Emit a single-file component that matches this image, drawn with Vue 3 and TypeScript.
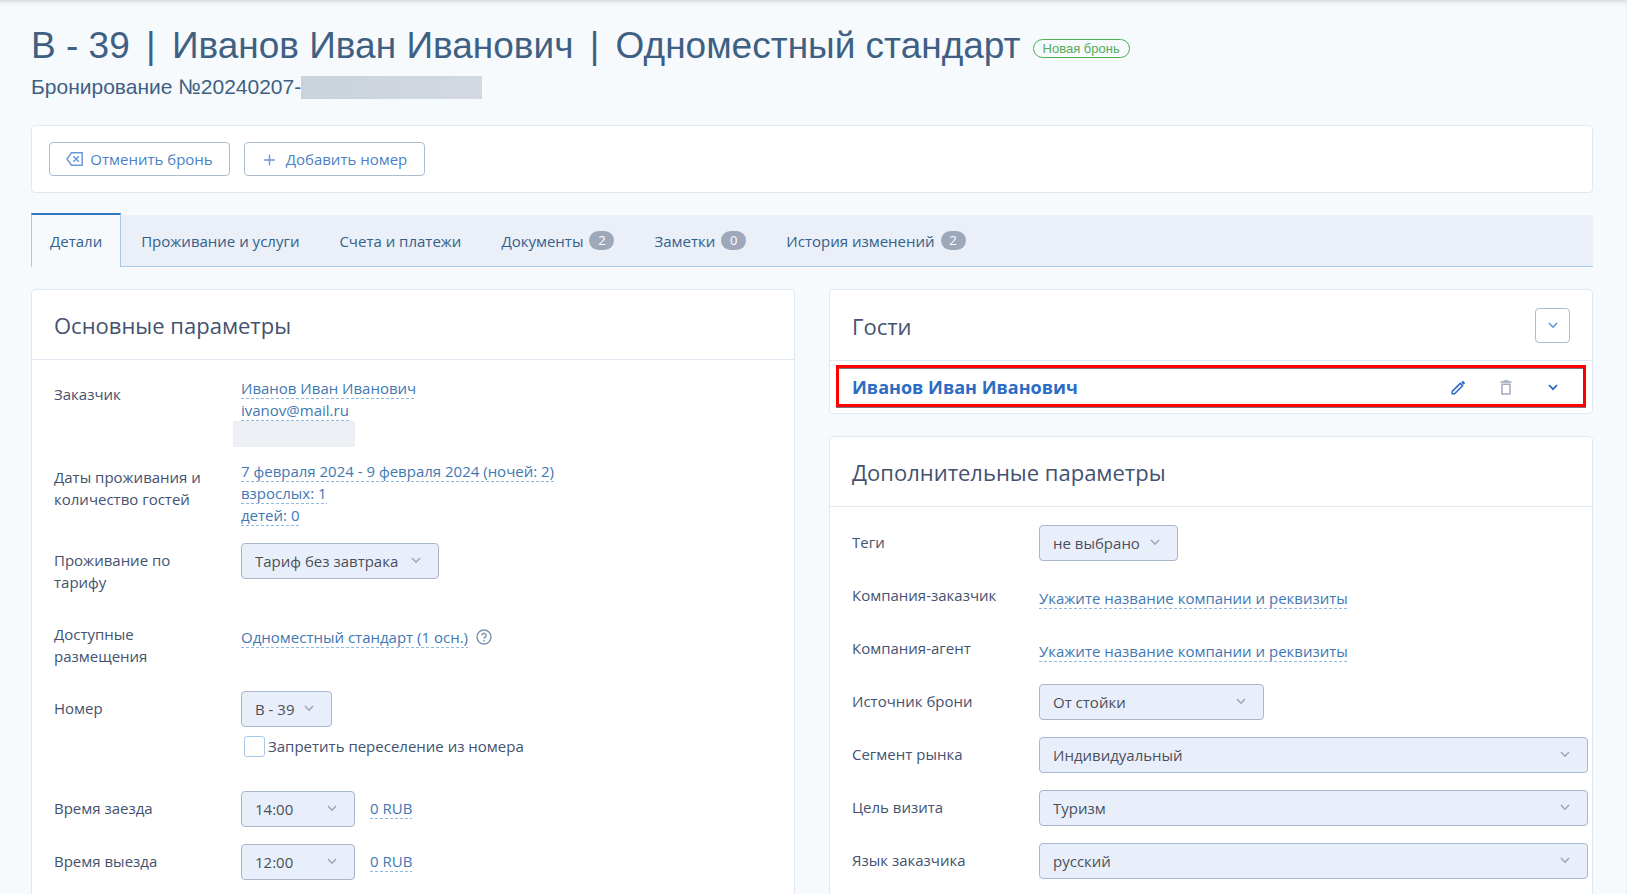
<script setup lang="ts">
import { ref } from 'vue'

interface Tab {
  id: string
  title: string
  count?: number
}

interface SelectRow {
  id: string
  label: string
  value: string
  size: string
}

const tabs: Tab[] = [
  { id: 'details', title: 'Детали' },
  { id: 'services', title: 'Проживание и услуги' },
  { id: 'payments', title: 'Счета и платежи' },
  { id: 'documents', title: 'Документы', count: 2 },
  { id: 'notes', title: 'Заметки', count: 0 },
  { id: 'history', title: 'История изменений', count: 2 },
]
const activeTab = ref('details')
const lockRoom = ref(false)

const times = [
  { id: 'arrival', label: 'Время заезда', value: '14:00', price: '0 RUB' },
  { id: 'departure', label: 'Время выезда', value: '12:00', price: '0 RUB' },
]

const companies = ['Компания-заказчик', 'Компания-агент']

const extras: SelectRow[] = [
  { id: 'source', label: 'Источник брони', value: 'От стойки', size: 'wide' },
  { id: 'segment', label: 'Сегмент рынка', value: 'Индивидуальный', size: 'full' },
  { id: 'purpose', label: 'Цель визита', value: 'Туризм', size: 'full' },
  { id: 'language', label: 'Язык заказчика', value: 'русский', size: 'full' },
]
</script>

<template>
  <main class="page">
    <header class="heading">
      <div class="title-line">
        <h1>B - 39 <span class="bar">|</span> Иванов Иван Иванович <span class="bar">|</span> Одноместный стандарт</h1>
        <span class="status">Новая бронь</span>
      </div>
      <p class="number">Бронирование №20240207-<span class="redacted"></span></p>
    </header>

    <section class="toolbar">
      <button type="button" class="action">
        <svg width="17" height="14" viewBox="0 0 17 14" fill="none" stroke="currentColor" stroke-width="1.5">
          <path d="M5.5 .8H16.2v12.4H5.5L1 7z" />
          <path d="M7.5 4.2l5.4 5.6M12.9 4.2L7.5 9.8" />
        </svg>
        Отменить бронь
      </button>
      <button type="button" class="action">
        <svg width="17" height="14" viewBox="0 0 17 14" fill="none" stroke="currentColor" stroke-width="1.4">
          <path d="M7.5 2.5v11M2 8h11" />
        </svg>
        Добавить номер
      </button>
    </section>

    <nav class="tabs">
      <button
        v-for="tab in tabs"
        :key="tab.id"
        type="button"
        class="tab"
        :class="{ active: tab.id === activeTab }"
        @click="activeTab = tab.id"
      >
        {{ tab.title }}
        <span v-if="tab.count !== undefined" class="count">{{ tab.count }}</span>
      </button>
    </nav>

    <div class="columns">
      <section class="card">
        <div class="card-head"><h2>Основные параметры</h2></div>
        <div class="rows">
          <div class="row">
            <span class="label">Заказчик</span>
            <div class="lines masked">
              <a href="#">Иванов Иван Иванович</a>
              <a href="#">ivanov@mail.ru</a>
            </div>
          </div>
          <div class="row">
            <span class="label">Даты проживания и количество гостей</span>
            <div class="lines">
              <a href="#">7 февраля 2024 - 9 февраля 2024 (ночей: 2)</a>
              <a href="#">взрослых: 1</a>
              <a href="#">детей: 0</a>
            </div>
          </div>
          <div class="row">
            <label class="label" for="rate">Проживание по тарифу</label>
            <div class="select rate">
              <select id="rate"><option>Тариф без завтрака</option></select>
              <svg width="10" height="7" viewBox="0 0 10 7"><path d="M1 1l4 4.2L9 1" /></svg>
            </div>
          </div>
          <div class="row">
            <span class="label">Доступные размещения</span>
            <div class="inline">
              <a href="#">Одноместный стандарт (1 осн.)</a>
              <svg class="help" width="16" height="16" viewBox="0 0 16 16" fill="none" stroke="currentColor" stroke-width="1.4">
                <circle cx="8" cy="8" r="7" />
                <path d="M5.9 6.4a2.1 2.1 0 1 1 3.3 1.7C8.4 8.7 8 9 8 9.8M8 11v1.4" />
              </svg>
            </div>
          </div>
          <div class="row">
            <label class="label" for="room">Номер</label>
            <div class="room-cell">
              <div class="select room">
                <select id="room"><option>B - 39</option></select>
                <svg width="10" height="7" viewBox="0 0 10 7"><path d="M1 1l4 4.2L9 1" /></svg>
              </div>
              <label class="check">
                <input v-model="lockRoom" type="checkbox" />
                Запретить переселение из номера
              </label>
            </div>
          </div>
          <div v-for="t in times" :key="t.id" class="row">
            <label class="label" :for="t.id">{{ t.label }}</label>
            <div class="time-cell">
              <div class="select time">
                <select :id="t.id"><option>{{ t.value }}</option></select>
                <svg width="10" height="7" viewBox="0 0 10 7"><path d="M1 1l4 4.2L9 1" /></svg>
              </div>
              <div class="inline"><a href="#">{{ t.price }}</a></div>
            </div>
          </div>
        </div>
      </section>

      <div class="side">
        <section class="card">
          <div class="card-head">
            <h2>Гости</h2>
            <button type="button" class="toggle" aria-label="Свернуть список гостей">
              <svg width="10" height="7" viewBox="0 0 10 7"><path d="M1 1l4 4.2L9 1" /></svg>
            </button>
          </div>
          <div class="guest">
            <a class="guest-name" href="#">Иванов Иван Иванович</a>
            <div class="guest-actions">
              <button type="button" aria-label="Редактировать">
                <svg width="15" height="15" viewBox="0 0 15 15" fill="none" stroke="currentColor" stroke-width="1.5">
                  <path d="M1.2 13.8v-2.4l8-8 2.4 2.4-8 8z" />
                  <path d="M10.2 2.6L12 .8 14.2 3l-1.8 1.8z" fill="currentColor" stroke="none" />
                </svg>
              </button>
              <button type="button" class="muted" aria-label="Удалить">
                <svg width="12" height="15" viewBox="0 0 12 15" fill="none" stroke="currentColor" stroke-width="1.5">
                  <path d="M.5 2h11M3.5 1h5M2 4.2V14h8V4.2z" />
                </svg>
              </button>
              <button type="button" aria-label="Развернуть">
                <svg width="10" height="7" viewBox="0 0 10 7" class="chevron"><path d="M1 1l4 4.2L9 1" /></svg>
              </button>
            </div>
            <div class="highlight"></div>
          </div>
        </section>

        <section class="card">
          <div class="card-head"><h2>Дополнительные параметры</h2></div>
          <div class="rows">
            <div class="row">
              <label class="label" for="tags">Теги</label>
              <div class="select tags">
                <select id="tags"><option>не выбрано</option></select>
                <svg width="10" height="7" viewBox="0 0 10 7"><path d="M1 1l4 4.2L9 1" /></svg>
              </div>
            </div>
            <div v-for="c in companies" :key="c" class="row">
              <span class="label">{{ c }}</span>
              <div class="inline"><a href="#">Укажите название компании и реквизиты</a></div>
            </div>
            <div v-for="e in extras" :key="e.id" class="row">
              <label class="label" :for="e.id">{{ e.label }}</label>
              <div class="select" :class="e.size">
                <select :id="e.id"><option>{{ e.value }}</option></select>
                <svg width="10" height="7" viewBox="0 0 10 7"><path d="M1 1l4 4.2L9 1" /></svg>
              </div>
            </div>
          </div>
        </section>
      </div>
    </div>
  </main>
</template>

<style>
html {
  scrollbar-width: none;
  background: #f6fafd;
}
</style>

<style scoped>
* {
  box-sizing: border-box;
}

.page {
  min-height: 100vh;
  padding: 21px 33px 24px 31px;
  border-right: 1px solid #eef1f4;
  background: #f6fafd;
  box-shadow: inset 0 5px 5px -4px #c6cbd0;
  color: #44526f;
  font: 15px/22px "Open Sans", "Noto Sans", sans-serif;
}

button,
select,
input {
  margin: 0;
  font: inherit;
  color: inherit;
}

button {
  cursor: pointer;
}

.heading {
  font-family: "Liberation Sans", Arial, sans-serif;
  color: #3f6083;
}

.title-line {
  display: flex;
  align-items: center;
  gap: 12px;
}

h1 {
  margin: 0;
  font-size: 37px;
  line-height: 50px;
  font-weight: 400;
}

.bar {
  margin: 0 6px;
}

.status {
  padding: 0 9px;
  border: 1px solid #4caf50;
  border-radius: 10px;
  margin-top: 4px;
  color: #55ab5b;
  font-size: 13px;
  line-height: 17px;
}

.number {
  display: flex;
  align-items: center;
  margin: 3px 0 25px;
  font-size: 21px;
  line-height: 26px;
}

.redacted {
  width: 181px;
  height: 23px;
  background: linear-gradient(90deg, #cad2db, #d2d9e1);
}

.toolbar {
  display: flex;
  gap: 14px;
  padding: 16px 17px;
  border: 1px solid #e0e8f2;
  border-radius: 4px;
  background: #fff;
}

.action {
  display: flex;
  align-items: center;
  justify-content: center;
  gap: 7px;
  width: 181px;
  height: 34px;
  padding: 0;
  border: 1px solid #adbdd0;
  border-radius: 4px;
  background: #fff;
  color: #4b7fc6;
}

.action svg {
  color: #6a98d6;
}

.tabs {
  display: flex;
  height: 52px;
  margin-top: 22px;
  border-bottom: 1px solid #a9cae6;
  background: #ebeff7;
}

.tab {
  display: flex;
  align-items: center;
  gap: 6px;
  padding: 0 20px;
  border: 0;
  background: none;
  color: #33618c;
}

.tab.active {
  height: 54px;
  margin-top: -2px;
  padding: 0 18px;
  border: 1px solid #a9cae6;
  border-top: 2px solid #2f77b8;
  border-bottom: 0;
  background: #f6fafd;
}

.count {
  width: 25px;
  border-radius: 10px;
  background: #9da8bb;
  color: #fff;
  font-size: 13px;
  line-height: 19px;
  text-align: center;
}

.columns {
  display: grid;
  grid-template-columns: 1fr 1fr;
  gap: 34px;
  margin-top: 22px;
}

.side {
  display: flex;
  flex-direction: column;
  gap: 22px;
}

.card {
  border: 1px solid #e0e8f2;
  border-radius: 4px;
  background: #fff;
}

.side .card:last-child {
  flex: 1;
}

.card-head {
  display: flex;
  align-items: center;
  justify-content: space-between;
  min-height: 70px;
  padding: 18px 22px 17px;
  border-bottom: 1px solid #e0e8f2;
}

h2 {
  margin: 0;
  font-size: 22px;
  line-height: 32px;
  font-weight: 400;
}

.select svg,
.toggle svg,
.chevron {
  fill: none;
  stroke: currentColor;
  stroke-width: 1.5;
}

.toggle {
  display: flex;
  align-items: center;
  justify-content: center;
  width: 35px;
  height: 35px;
  padding: 0;
  border: 1px solid #adbdd0;
  border-radius: 4px;
  background: #fff;
  color: #5c8fd6;
}

.guest {
  position: relative;
  display: flex;
  align-items: center;
  justify-content: space-between;
  height: 52px;
  padding: 0 22px;
}

.guest-name {
  color: #2b6cc4;
  font-size: 18px;
  font-weight: 700;
  text-decoration: none;
}

.guest-actions {
  display: flex;
  gap: 12px;
}

.guest-actions button {
  display: flex;
  align-items: center;
  justify-content: center;
  width: 35px;
  height: 35px;
  padding: 0;
  border: 0;
  background: none;
  color: #2b6cc4;
}

.guest-actions .muted {
  color: #a3acbd;
}

.guest-actions .chevron {
  stroke-width: 1.8;
}

.highlight {
  position: absolute;
  inset: 4px 6px 6px 6px;
  border: 3px solid #f00;
  filter: drop-shadow(0 1px 0 #777);
  pointer-events: none;
}

.rows {
  display: flex;
  flex-direction: column;
  gap: 17px;
  padding: 17px 4px 30px 22px;
}

.side .rows {
  padding-top: 18px;
}

.row {
  display: grid;
  grid-template-columns: 165px 1fr;
  column-gap: 22px;
  align-items: start;
  min-height: 36px;
}

.label {
  padding: 6px 0 7px;
}

.lines,
.room-cell {
  display: flex;
  flex-direction: column;
  align-items: flex-start;
}

.lines a,
.inline a {
  color: #3f78b3;
  text-decoration: none;
  background: repeating-linear-gradient(90deg, #8fbbe0 0 3px, transparent 3px 5px) left bottom / 100% 1px no-repeat;
}

.masked::after {
  content: "";
  width: 122px;
  height: 26px;
  margin: 0 0 -4px -8px;
  background: #ecf0f5;
}

.inline {
  display: flex;
  align-items: center;
  gap: 8px;
  padding-top: 9px;
}

.time-cell .inline {
  padding-top: 6px;
}

.help {
  color: #7d92ad;
}

.select {
  position: relative;
  height: 36px;
  color: #4a4f5a;
}

.select select {
  width: 100%;
  height: 100%;
  padding: 0 30px 0 13px;
  border: 1px solid #aab6ca;
  border-radius: 4px;
  background: #e9effa;
  appearance: none;
}

.select svg {
  position: absolute;
  top: 14px;
  right: 18px;
  color: #9aa6ba;
  pointer-events: none;
}

.rate {
  width: 198px;
}

.room {
  width: 91px;
}

.time {
  width: 114px;
}

.tags {
  width: 139px;
}

.wide {
  width: 225px;
}

.room-cell {
  gap: 8px;
  padding-bottom: 17px;
}

.check {
  display: flex;
  align-items: center;
  gap: 3px;
  padding-left: 3px;
}

.check input {
  width: 21px;
  height: 21px;
  border: 1px solid #a9cae6;
  border-radius: 3px;
  background: #fff;
  appearance: none;
}

.check input:checked {
  background: #a9cae6;
}

.time-cell {
  display: flex;
  align-items: flex-start;
  gap: 15px;
}
</style>
